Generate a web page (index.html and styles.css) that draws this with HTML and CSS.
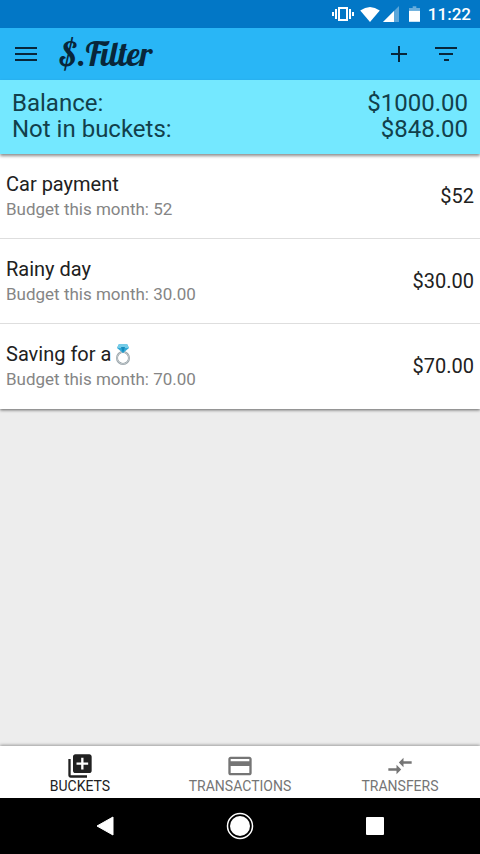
FILE: index.html
```html
<!DOCTYPE html>
<html lang="en">
<head>
<meta charset="utf-8">
<meta name="viewport" content="width=device-width, initial-scale=1">
<title>$.Filter</title>
<link rel="stylesheet" href="styles.css">
</head>
<body>
<div class="status-bar">
  <svg class="vibrate" viewBox="0 0 22 18" width="22" height="18" aria-hidden="true"><path d="M7 3h8v12H7z" fill="none" stroke="currentColor" stroke-width="2"/><path d="M4 4v10M18 4v10M1 7v4M21 7v4" stroke="currentColor" stroke-width="2"/></svg>
  <svg class="wifi" viewBox="0 0 22 18" width="20" height="16" aria-hidden="true"><path d="M0 5Q11-3 22 5L11 18z" fill="currentColor"/></svg>
  <svg class="signal" viewBox="0 0 16 16" width="16" height="16" aria-hidden="true"><path d="M16 0v16H0z" fill="currentColor" opacity=".35"/><path d="M11 5v11H0z" fill="currentColor"/></svg>
  <svg class="battery" viewBox="0 0 12 17" width="11" height="16" aria-hidden="true"><path d="M4 0h4v2h4v3H0V2h4z" fill="currentColor" opacity=".4"/><path d="M0 5h12v12H0z" fill="currentColor"/></svg>
  <time class="clock">11:22</time>
</div>
<header class="app-bar">
  <button class="icon-button" aria-label="Menu"><svg viewBox="0 0 22 16" width="22" height="16"><path d="M0 2h22M0 8h22M0 14h22" stroke="currentColor" stroke-width="2"/></svg></button>
  <h1 class="brand">$.Filter</h1>
  <button class="icon-button" aria-label="Add bucket"><svg viewBox="0 0 16 16" width="16" height="16"><path d="M8 0v16M0 8h16" stroke="currentColor" stroke-width="2"/></svg></button>
  <button class="icon-button" aria-label="Filter"><svg viewBox="0 0 22 16" width="22" height="16"><path d="M0 2h22M4 8h14M9 14h5" stroke="currentColor" stroke-width="2"/></svg></button>
</header>
<section class="summary">
  <div class="summary-row"><span>Balance:</span><span>$1000.00</span></div>
  <div class="summary-row"><span>Not in buckets:</span><span>$848.00</span></div>
</section>
<main class="content">
  <ul class="buckets">
    <li class="bucket"><div><h2 class="name">Car payment</h2><p class="budget">Budget this month: 52</p></div><span class="amount">$52</span></li>
    <li class="bucket"><div><h2 class="name">Rainy day</h2><p class="budget">Budget this month: 30.00</p></div><span class="amount">$30.00</span></li>
    <li class="bucket"><div><h2 class="name">Saving for a <svg class="ring" viewBox="0 0 16 22" width="16" height="22" role="img" aria-label="ring"><circle cx="8" cy="15" r="6" fill="none" stroke="#929da3" stroke-width="2"/><circle cx="8" cy="15" r="6" fill="none" stroke="#c5cdd0" stroke-width="1"/><path d="M4 1h8l2 4-6 5-6-5z" fill="#32a8d5"/><path d="M4 1h8l2 4H2z" fill="#75cce8"/><path d="M6 4h4L8 10z" fill="#168bbd"/></svg></h2><p class="budget">Budget this month: 70.00</p></div><span class="amount">$70.00</span></li>
  </ul>
</main>
<nav class="tabs" aria-label="Main">
  <a class="tab active" href="#buckets" aria-current="page"><svg viewBox="0 0 24 24" width="28" height="28"><path d="M4 6H2v14c0 1.100.9 2 2 2h14v-2H4zm16-4H8c-1.100 0-2 .9-2 2v12c0 1.100.9 2 2 2h12c1.100 0 2-.9 2-2V4c0-1.100-.9-2-2-2zm-1 9h-4v4h-2v-4H9V9h4V5h2v4h4z" fill="currentColor"/></svg>BUCKETS</a>
  <a class="tab" href="#transactions"><svg viewBox="0 0 24 24" width="28" height="28"><path d="M20 4H4c-1.110 0-2 .89-2 2v12c0 1.110.89 2 2 2h16c1.110 0 2-.89 2-2V6c0-1.110-.89-2-2-2zm0 14H4v-6h16zm0-10H4V6h16z" fill="currentColor"/></svg>TRANSACTIONS</a>
  <a class="tab" href="#transfers"><svg viewBox="0 0 24 24" width="28" height="28"><path d="M9.010 14H2v2h7.010v3L13 15l-3.990-4zm5.980-1v-3H22V8h-7.010V5L11 9z" fill="currentColor"/></svg>TRANSFERS</a>
</nav>
<div class="system-nav">
  <button class="system-button" aria-label="Back"><svg viewBox="0 0 18 20" width="18" height="20"><path d="M17 1v18L1 10z" fill="currentColor" stroke="currentColor" stroke-linejoin="round"/></svg></button>
  <button class="system-button" aria-label="Home"><svg viewBox="0 0 28 28" width="28" height="28"><circle cx="14" cy="14" r="12.500" fill="none" stroke="currentColor" stroke-width="1.500"/><circle cx="14" cy="14" r="10" fill="currentColor"/></svg></button>
  <button class="system-button" aria-label="Recent apps"><svg viewBox="0 0 18 18" width="18" height="18"><rect width="18" height="18" rx="1" fill="currentColor"/></svg></button>
</div>
</body>
</html>
```
FILE: styles.css
```css
* { box-sizing: border-box; }

body {
  margin: 0;
  min-height: 100vh;
  display: flex;
  flex-direction: column;
  background: #ededed;
  color: #212121;
  font-family: Roboto, "Liberation Sans", sans-serif;
}

h1, h2, p, ul { margin: 0; padding: 0; }
button { border: 0; padding: 0; background: none; color: inherit; }

.status-bar {
  height: 28px;
  padding: 0 9px;
  display: flex;
  align-items: center;
  justify-content: flex-end;
  background: #0277c6;
  color: #fff;
}
.wifi { margin-left: 6px; }
.signal { margin-left: 3px; }
.battery { margin-left: 10px; }
.clock { margin-left: 8px; font-size: 17px; font-weight: 500; }

.app-bar {
  height: 52px;
  padding: 0 12px 0 4px;
  display: flex;
  align-items: center;
  background: #29b6f6;
  color: #08263a;
}
.icon-button {
  width: 44px;
  height: 44px;
  display: grid;
  place-items: center;
}
.brand {
  flex: 1;
  padding-left: 11px;
  font: 400 33px/40px Lobster, "Liberation Serif", serif;
}
.brand + .icon-button { margin-right: 3px; }

.summary {
  position: relative;
  padding: 10px 12px 12px;
  background: #74e8ff;
  color: #12404b;
  font-size: 24px;
  line-height: 26px;
  box-shadow: 0 2px 3px rgba(0, 0, 0, .45);
}
.summary-row { display: flex; justify-content: space-between; }

.content { flex: 1; }
.buckets {
  list-style: none;
  background: #fff;
  box-shadow: 0 1px 3px rgba(0, 0, 0, .6);
}
.bucket {
  min-height: 85px;
  padding: 0 6px;
  display: flex;
  align-items: center;
  justify-content: space-between;
  border-bottom: 1px solid #dedede;
}
.bucket:last-child { border-bottom-color: transparent; }
.name {
  display: flex;
  align-items: center;
  gap: 4px;
  font-size: 20px;
  font-weight: 400;
  line-height: 26px;
}
.budget { color: #858585; font-size: 17px; line-height: 24px; }
.amount { font-size: 20px; line-height: 26px; }

.tabs {
  height: 52px;
  display: flex;
  background: #fff;
  box-shadow: 0 -1px 3px rgba(0, 0, 0, .35);
}
.tab {
  flex: 1;
  padding-top: 6px;
  display: flex;
  flex-direction: column;
  align-items: center;
  color: #757575;
  font-size: 14px;
  line-height: 12px;
  text-decoration: none;
}
.tab.active { color: #212121; }

.system-nav {
  height: 56px;
  padding: 0 38px;
  display: flex;
  background: #000;
  color: #fff;
}
.system-button { flex: 1; display: grid; place-items: center; }
```
